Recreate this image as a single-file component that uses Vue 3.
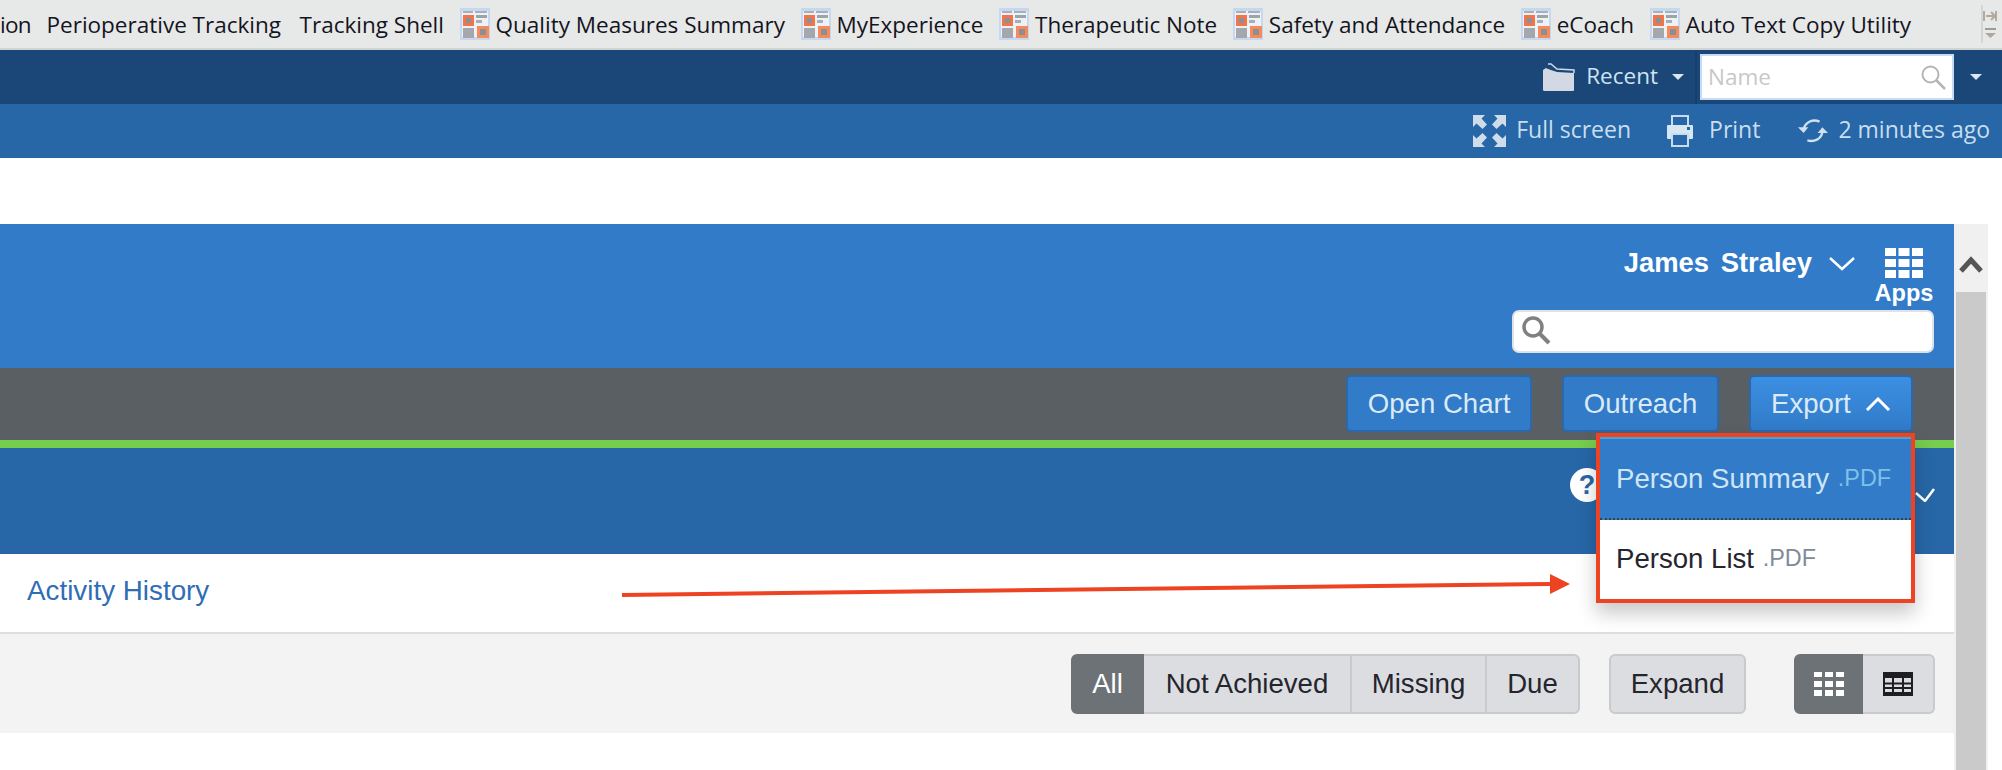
<script setup>
const shortcuts = [
  { label: 'ion', icon: false },
  { label: 'Perioperative Tracking', icon: false },
  { label: 'Tracking Shell', icon: false },
  { label: 'Quality Measures Summary', icon: true },
  { label: 'MyExperience', icon: true },
  { label: 'Therapeutic Note', icon: true },
  { label: 'Safety and Attendance', icon: true },
  { label: 'eCoach', icon: true },
  { label: 'Auto Text Copy Utility', icon: true }
]
const filters = [
  { label: 'All', width: 73 },
  { label: 'Not Achieved', width: 208 },
  { label: 'Missing', width: 135 },
  { label: 'Due', width: 93 }
]
</script>

<template>
  <div class="page">
    <div class="favbar">
      <div class="favlist">
        <div v-for="s in shortcuts" :key="s.label" class="fav">
          <svg v-if="s.icon" class="favicon" width="30" height="32" viewBox="0 0 30 32">
            <rect x="0" y="0" width="30" height="32" fill="#c6d8f0" />
            <rect x="2" y="3" width="26" height="26" fill="#eef2f6" />
            <rect x="3" y="7" width="11" height="11" fill="#f0764a" />
            <rect x="6" y="10" width="5" height="5" fill="#8a9098" />
            <rect x="3" y="20" width="11" height="10" fill="#a4a8ac" />
            <rect x="17" y="18" width="12" height="12" fill="#f58a5c" />
            <rect x="20" y="21" width="6" height="6" fill="#8a8f94" />
            <rect x="16" y="7" width="11" height="3" fill="#9ba3ab" />
            <rect x="16" y="12" width="6" height="3" fill="#a8aeb4" />
            <rect x="3" y="3" width="10" height="2" fill="#a8b0b8" />
            <rect x="15" y="3" width="12" height="2" fill="#a8b0b8" />
          </svg>
          <span>{{ s.label }}</span>
        </div>
      </div>
      <div class="grip">
        <svg width="16" height="36" viewBox="0 0 16 36">
          <path d="M1 6v10M3 11h8M8 7l4 4-4 4M13 6v10" stroke="#b5a99e" stroke-width="2" fill="none" />
          <path d="M2 24h11" stroke="#a09a94" stroke-width="2" />
          <path d="M2 28h11l-5.500 5z" fill="#b0a8a0" />
        </svg>
      </div>
    </div>

    <div class="navbar">
      <svg class="folder" width="32" height="28" viewBox="0 0 32 28">
        <path d="M0 7l3-2 2 1 9 3 17 1V27q0 1-1 1H2q-2 0-2-1z" fill="#d2d9e5" />
        <path d="M5 1h3l6 5 17 1v3" fill="none" stroke="#d2d9e5" stroke-width="1.500" />
      </svg>
      <span class="recent lift">Recent</span>
      <span class="caret"></span>
      <span class="sep"></span>
      <div class="namebox">
        <span class="placeholder">Name</span>
        <svg width="26" height="26" viewBox="0 0 26 26">
          <circle cx="10.500" cy="10.500" r="8" fill="none" stroke="#b4b4b4" stroke-width="2" />
          <path d="M16.500 16.500L25 25" stroke="#b4b4b4" stroke-width="2.500" />
        </svg>
      </div>
      <span class="caret last"></span>
    </div>

    <div class="toolstrip">
      <svg width="33" height="32" viewBox="0 0 33 32" class="ti">
        <g fill="#cfdcea">
          <path d="M0 0h12L8.500 3.500 14 9.500 9.500 14 3.500 8.500 0 12z" />
          <path d="M33 0H21l3.500 3.500L19 9.500 23.500 14l6-5.500L33 12z" />
          <path d="M0 32h12L8.500 28.500 14 22.500 9.500 18 3.500 23.500 0 20z" />
          <path d="M33 32H21l3.500-3.500L19 22.500 23.500 18l6 5.500L33 20z" />
        </g>
      </svg>
      <span class="lift">Full screen</span>
      <svg width="28" height="32" viewBox="0 0 28 32" class="ti print">
        <path d="M6 10V1h16v9" fill="none" stroke="#c8dcef" stroke-width="2" />
        <path d="M1 11q0-1 1-1h24q1 0 1 1v12q0 1-1 1H2q-1 0-1-1z" fill="#d8e6f2" />
        <rect x="6" y="19" width="16" height="12" fill="#2767a7" stroke="#c8dcef" stroke-width="2" />
        <rect x="21" y="12" width="3" height="3" fill="#2767a7" />
      </svg>
      <span class="lift">Print</span>
      <svg width="30" height="30" viewBox="0 0 32 30" class="ti refresh">
        <path d="M6 13C8 5 16 2 23 5" fill="none" stroke="#d0e0ee" stroke-width="2.500" />
        <path d="M0 11l6 6 5-6z" fill="#d0e0ee" />
        <path d="M26 16c-1 8-9 11-16 9" fill="none" stroke="#d0e0ee" stroke-width="2.500" />
        <path d="M21 17l5-6 6 6z" fill="#d0e0ee" />
      </svg>
      <span class="lift">2 minutes ago</span>
    </div>

    <div class="gap"></div>

    <div class="frame">
      <div class="content">
        <header class="brand">
          <div class="userrow">
            <span class="user">James Straley</span>
            <svg class="chev" width="26" height="14" viewBox="0 0 26 14">
              <path d="M1 1l12 11L25 1" fill="none" stroke="#fff" stroke-width="2.500" />
            </svg>
            <div class="apps">
              <svg width="38" height="30" viewBox="0 0 38 30">
                <g fill="#fff">
                  <rect x="0" y="0" width="11" height="8" /><rect x="13.500" y="0" width="11" height="8" /><rect x="27" y="0" width="11" height="8" />
                  <rect x="0" y="11" width="11" height="8" /><rect x="13.500" y="11" width="11" height="8" /><rect x="27" y="11" width="11" height="8" />
                  <rect x="0" y="22" width="11" height="8" /><rect x="13.500" y="22" width="11" height="8" /><rect x="27" y="22" width="11" height="8" />
                </g>
              </svg>
              <span>Apps</span>
            </div>
          </div>
          <div class="search">
            <svg width="30" height="30" viewBox="0 0 30 30">
              <circle cx="12" cy="12" r="9" fill="none" stroke="#808080" stroke-width="3.500" />
              <path d="M18.500 18.500L28 28" stroke="#808080" stroke-width="4" />
            </svg>
          </div>
        </header>

        <div class="actions">
          <button class="btn">Open Chart</button>
          <button class="btn">Outreach</button>
          <div class="export">
            <button class="btn open">
              Export
              <svg width="26" height="14" viewBox="0 0 26 14">
                <path d="M2 13L13 2l11 11" fill="none" stroke="#fff" stroke-width="3" />
              </svg>
            </button>
            <div class="menu">
              <div class="item active">Person Summary <small>.PDF</small></div>
              <div class="item">Person List <small>.PDF</small></div>
            </div>
          </div>
        </div>

        <div class="subbar">
          <span class="help">?</span>
          <svg class="subchev" width="20" height="14" viewBox="0 0 20 14">
            <path d="M1 5l9 8 9-12" fill="none" stroke="#fff" stroke-width="2.500" />
          </svg>
        </div>

        <div class="tabs"><a class="tab">Activity History</a></div>

        <div class="filters">
          <div class="group">
            <span
              v-for="(f, i) in filters"
              :key="f.label"
              class="seg"
              :class="{ on: i === 0 }"
              :style="{ width: f.width + 'px' }"
            >{{ f.label }}</span>
          </div>
          <span class="seg solo">Expand</span>
          <div class="group views">
            <span class="seg on first">
              <svg width="30" height="24" viewBox="0 0 30 24">
                <path fill="#fff" d="M0 0h8v5H0zM11 0h8v5h-8zM22 0h8v5h-8zM0 9h8v6H0zM11 9h8v6h-8zM22 9h8v6h-8zM0 18h8v6H0zM11 18h8v6h-8zM22 18h8v6h-8z" />
              </svg>
            </span>
            <span class="seg second">
              <svg width="30" height="24" viewBox="0 0 30 24">
                <rect x="1" y="1" width="28" height="22" fill="#dcdde0" stroke="#1e1e22" stroke-width="2" />
                <rect x="0" y="0" width="30" height="6" fill="#1e1e22" />
                <rect x="0" y="20" width="30" height="4" fill="#1e1e22" />
                <path d="M10 6v14M20 6v14M0 11.500h30M0 16h30" stroke="#1e1e22" stroke-width="2" />
              </svg>
            </span>
          </div>
        </div>
      </div>

      <aside class="scroll">
        <div class="scrollbtn">
          <svg width="24" height="17" viewBox="0 0 24 17">
            <path d="M2 15L12 4l10 11" fill="none" stroke="#555" stroke-width="5" />
          </svg>
        </div>
        <div class="thumb"></div>
      </aside>
    </div>

    <svg class="annot" width="960" height="34" viewBox="0 0 960 34">
      <path d="M0 25L930 14" stroke="#ee4323" stroke-width="4" />
      <path d="M928 4l20 10-20 10z" fill="#ee4323" />
    </svg>
  </div>
</template>

<style>
html, body { margin: 0; background: #fff; overflow: hidden; }
</style>

<style scoped>
.page {
  position: relative;
  width: 2002px;
  height: 770px;
  overflow: hidden;
  display: flex;
  flex-direction: column;
  font-family: "Liberation Sans", Arial, sans-serif;
  background: #fff;
}
.lift { margin-bottom: 4px; }

/* favourites bar */
.favbar {
  height: 48px;
  flex: none;
  border-bottom: 2px solid #d2d3d3;
  background: #e7e8e8;
  display: flex;
  justify-content: space-between;
  align-items: center;
  font-family: "Open Sans", sans-serif;
  font-size: 22.500px;
  color: #14141e;
}
.favlist { display: flex; align-items: center; gap: 15.600px; }
.fav { display: flex; align-items: center; gap: 6px; white-space: nowrap; }
.fav:first-child { letter-spacing: -0.700px; }
.fav:nth-child(3) { margin-left: 3px; }
.favicon { flex: none; }
.grip {
  width: 17px;
  height: 38px;
  border-left: 2px solid #d4d4d4;
  margin-right: 2px;
  display: flex;
}

/* dark nav */
.navbar {
  height: 54px;
  flex: none;
  background: #1a4778;
  display: flex;
  align-items: center;
  justify-content: flex-end;
  padding-right: 20px;
  font-family: "Open Sans", sans-serif;
  font-size: 22.500px;
  color: #cfe3f2;
}
.recent { margin-left: 11px; }
.caret {
  width: 0;
  height: 0;
  border-left: 6px solid transparent;
  border-right: 6px solid transparent;
  border-top: 6px solid #dbe6f1;
  margin-left: 14px;
}
.caret.last { margin-left: 16px; }
.sep { width: 2px; height: 54px; background: #164069; margin: 0 3px 0 11px; }
.namebox {
  box-sizing: border-box;
  width: 254px;
  height: 46px;
  background: #fff;
  border: 2px solid #c6dcf6;
  display: flex;
  align-items: center;
  justify-content: space-between;
  padding: 0 6px 0 6px;
}
.placeholder { color: #c8c8c8; margin-bottom: 2px; }

/* tool strip */
.toolstrip {
  height: 54px;
  flex: none;
  background: #2767a7;
  display: flex;
  align-items: center;
  justify-content: flex-end;
  padding-right: 12px;
  font-family: "Open Sans", sans-serif;
  font-size: 23px;
  color: #c9deef;
}
.ti { margin-right: 10px; flex: none; }
.ti.print { margin-left: 35px; margin-right: 15px; }
.ti.refresh { margin-left: 38px; }

.gap { height: 66px; flex: none; }

/* page frame */
.frame { flex: 1; display: flex; min-height: 0; }
.content { width: 1954px; flex: none; display: flex; flex-direction: column; }
.scroll {
  width: 34px;
  flex: none;
  background: #f0f0f0;
  display: flex;
  flex-direction: column;
  align-items: center;
}
.scrollbtn { height: 68px; padding-top: 32px; box-sizing: border-box; }
.thumb { width: 30px; flex: 1; background: #cacaca; }

.brand {
  height: 144px;
  flex: none;
  box-sizing: border-box;
  background: #317bc8;
  padding: 24px 20px 0 0;
  display: flex;
  flex-direction: column;
  align-items: flex-end;
  color: #fff;
  font-weight: bold;
}
.userrow { display: flex; align-items: flex-start; }
.user { font-size: 27.400px; line-height: 30px; word-spacing: 4px; }
.chev { margin: 9px 0 0 17px; }
.apps {
  width: 60px;
  margin-left: 19px;
  display: flex;
  flex-direction: column;
  align-items: center;
  font-size: 23.600px;
  line-height: 26px;
}
.apps svg { margin-bottom: 2px; }
.search {
  box-sizing: border-box;
  width: 422px;
  height: 43px;
  margin-top: 4px;
  background: #fff;
  border: 2px solid #dfe3e8;
  border-radius: 7px;
  padding: 3px 0 0 7px;
}

.actions {
  height: 80px;
  flex: none;
  box-sizing: border-box;
  background: #595f62;
  border-bottom: 8px solid #76cd4e;
  padding: 7px 41px 0 0;
  display: flex;
  justify-content: flex-end;
  align-items: flex-start;
  gap: 30px;
}
.btn {
  height: 57px;
  box-sizing: border-box;
  border: 2px solid #2a69ab;
  border-radius: 5px;
  background: #317bc8;
  color: #dbeaf7;
  font: 27.600px "Liberation Sans", Arial, sans-serif;
  padding: 0 19.700px;
  display: flex;
  align-items: center;
  gap: 14px;
}
.btn.open {
  width: 164px;
  padding: 0 20px;
  background: linear-gradient(#3c8fe3, #317bc8);
}
.export { position: relative; }
.menu {
  position: absolute;
  top: calc(100% + 1px);
  right: -2px;
  width: 319px;
  height: 170px;
  box-sizing: border-box;
  border: 4px solid #ee4323;
  background: #fff;
  box-shadow: 0 10px 18px rgba(0, 0, 0, 0.22);
  z-index: 3;
  font-size: 27.600px;
  color: #25252f;
}
.item {
  height: 79px;
  box-sizing: border-box;
  padding: 0 0 2px 16px;
  display: flex;
  align-items: center;
  white-space: pre;
}
.item small { font-size: 23.400px; color: #7f8a98; margin-left: 1px; }
.item.active {
  height: 83px;
  padding-bottom: 0;
  background: #317bc8;
  color: #cfe5f5;
  border-top: 2px solid #42a4dc;
  border-bottom: 2px dotted #3a3f44;
}
.item.active small { color: #7ec0e8; }

.subbar {
  height: 106px;
  flex: none;
  background: #2767a7;
  display: flex;
  justify-content: flex-end;
  align-items: flex-start;
  padding-right: 19px;
  box-sizing: border-box;
}
.help {
  width: 34px;
  height: 34px;
  border-radius: 50%;
  background: #fff;
  color: #2767a7;
  font-weight: bold;
  font-size: 27px;
  line-height: 34px;
  text-align: center;
  margin-top: 20px;
  margin-right: 311px;
}
.subchev { margin-top: 40px; }

.tabs {
  height: 80px;
  flex: none;
  box-sizing: border-box;
  padding: 0 0 4px 27px;
  display: flex;
  align-items: center;
  border-bottom: 2px solid #dedede;
}
.tab { font-size: 27.800px; color: #2f6db5; }

.filters {
  height: 99px;
  flex: none;
  box-sizing: border-box;
  background: #f3f3f3;
  padding: 20px 19px 0 0;
  display: flex;
  justify-content: flex-end;
  align-items: flex-start;
}
.group { display: flex; }
.seg {
  height: 60px;
  box-sizing: border-box;
  display: flex;
  align-items: center;
  justify-content: center;
  font-size: 27.600px;
  color: #25252f;
  background: #dcdde0;
  border: 2px solid #c9cacc;
  border-left-width: 0;
}
.group .seg:first-child { border-left-width: 2px; border-radius: 6px 0 0 6px; }
.group .seg:last-child { border-radius: 0 6px 6px 0; }
.seg.on { background: #6c7275; border-color: #6c7275; color: #fff; }
.seg.solo { border-left-width: 2px; border-radius: 6px; margin-left: 29px; width: 137px; }
.views { margin-left: 48px; }
.seg.first { width: 69px; }
.seg.second { width: 72px; }

.annot { position: absolute; left: 622px; top: 570px; z-index: 2; pointer-events: none; }
</style>
